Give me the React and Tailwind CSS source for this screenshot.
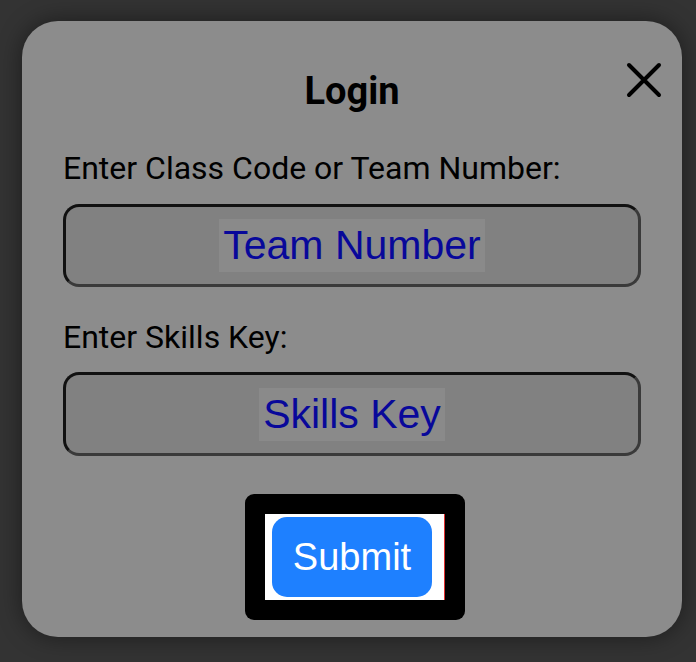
import { useState } from "react";

const LoginModal = () => {
  const [open] = useState(true);

  if (!open) return null;

  return (
    <div className="min-h-screen w-full bg-[#333333] flex justify-start items-start pt-[21px] pl-[22px]">
      {/* CARD */}
      <div
        className="relative w-[660px] h-[616px] bg-[#8c8c8c] rounded-[36px] shadow-[0_0_24px_rgba(0,0,0,0.45)] px-[41px] pt-[49px] flex flex-col"
        style={{ fontFamily: "Roboto, 'Noto Sans', sans-serif" }}
      >
        {/* CERRAR */}
        <button className="absolute top-[40px] right-[19px] w-[38px] h-[38px] flex items-center justify-center">
          <svg width="38" height="38" viewBox="0 0 38 38">
            <path
              d="M4 4 L34 34 M34 4 L4 34"
              stroke="#000"
              strokeWidth="4"
              strokeLinecap="round"
              fill="none"
            />
          </svg>
        </button>

        <h2 className="text-[38px] leading-[42px] font-bold text-black text-center">
          Login
        </h2>

        <label className="mt-[38px] text-[32px] leading-[36px] text-black whitespace-nowrap">
          Enter Class Code or Team Number:
        </label>
        <div className="mt-[18px] h-[83px] rounded-[16px] border-[3px] border-t-[#111111] border-l-[#111111] border-b-[#3a3a3a] border-r-[#3a3a3a] bg-[#818181] flex items-center justify-center">
          <span
            className="bg-[#8a8a8a] px-[4px] text-[41px] leading-[53px] text-[#08089a]"
            style={{ fontFamily: "'Liberation Sans', Arial, sans-serif" }}
          >
            Team Number
          </span>
        </div>

        <label className="mt-[32px] text-[32px] leading-[36px] text-black">
          Enter Skills Key:
        </label>
        <div className="mt-[17px] h-[84px] rounded-[16px] border-[3px] border-t-[#111111] border-l-[#111111] border-b-[#3a3a3a] border-r-[#3a3a3a] bg-[#818181] flex items-center justify-center">
          <span
            className="bg-[#8a8a8a] px-[4px] text-[41px] leading-[53px] text-[#08089a]"
            style={{ fontFamily: "'Liberation Sans', Arial, sans-serif" }}
          >
            Skills Key
          </span>
        </div>

        {/* BOTÓN */}
        <div className="mt-[38px] self-center ml-[6px] bg-black rounded-[9px] p-[20px]">
          <div className="bg-white border-r border-r-[#e03030] pl-[7px] pr-[12px] py-[3px]">
            <button
              className="w-[160px] h-[80px] rounded-[15px] bg-[#1e80ff] text-white text-[38px]"
              style={{ fontFamily: "'Liberation Sans', Arial, sans-serif" }}
            >
              Submit
            </button>
          </div>
        </div>
      </div>
    </div>
  );
};

export default function App() {
  return <LoginModal />;
}
